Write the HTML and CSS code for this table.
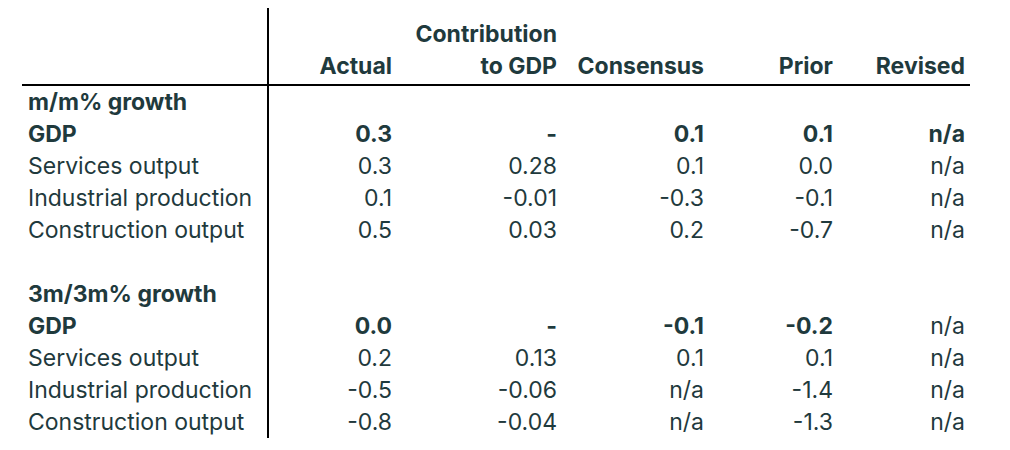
FILE: index.html
```html
<!DOCTYPE html>
<html>
<head>
<meta charset="utf-8">
<link rel="stylesheet" href="styles.css">
</head>
<body>
<table class="gdp">
  <colgroup>
    <col class="c-label">
    <col class="c-actual">
    <col class="c-contrib">
    <col class="c-cons">
    <col class="c-prior">
    <col class="c-rev">
  </colgroup>
  <thead>
    <tr>
      <th class="label"></th>
      <th>Actual</th>
      <th>Contribution<br>to GDP</th>
      <th>Consensus</th>
      <th>Prior</th>
      <th>Revised</th>
    </tr>
  </thead>
  <tbody>
    <tr class="bold"><td class="label">m/m% growth</td><td></td><td></td><td></td><td></td><td></td></tr>
    <tr><td class="label b">GDP</td><td class="b">0.3</td><td class="b">-</td><td class="b">0.1</td><td class="b">0.1</td><td class="b">n/a</td></tr>
    <tr><td class="label">Services output</td><td>0.3</td><td>0.28</td><td>0.1</td><td>0.0</td><td>n/a</td></tr>
    <tr><td class="label">Industrial production</td><td>0.1</td><td>-0.01</td><td>-0.3</td><td>-0.1</td><td>n/a</td></tr>
    <tr><td class="label">Construction output</td><td>0.5</td><td>0.03</td><td>0.2</td><td>-0.7</td><td>n/a</td></tr>
    <tr><td class="label"></td><td></td><td></td><td></td><td></td><td></td></tr>
    <tr class="bold"><td class="label">3m/3m% growth</td><td></td><td></td><td></td><td></td><td></td></tr>
    <tr><td class="label b">GDP</td><td class="b">0.0</td><td class="b">-</td><td class="b">-0.1</td><td class="b">-0.2</td><td>n/a</td></tr>
    <tr><td class="label">Services output</td><td>0.2</td><td>0.13</td><td>0.1</td><td>0.1</td><td>n/a</td></tr>
    <tr><td class="label">Industrial production</td><td>-0.5</td><td>-0.06</td><td>n/a</td><td>-1.4</td><td>n/a</td></tr>
    <tr><td class="label">Construction output</td><td>-0.8</td><td>-0.04</td><td>n/a</td><td>-1.3</td><td>n/a</td></tr>
  </tbody>
</table>
</body>
</html>
```

FILE: styles.css
```css
html, body {
  margin: 0;
  padding: 0;
  background: #ffffff;
}

body {
  padding: 8px 0 0 22px;
  font-family: Inter, "Liberation Sans", sans-serif;
  font-size: 23px;
  color: #1f3a3d;
}

.gdp {
  border-collapse: collapse;
  table-layout: fixed;
  width: 948px;
}

.c-label { width: 246px; }
.c-actual { width: 124px; }
.c-contrib { width: 165px; }
.c-cons { width: 147px; }
.c-prior { width: 129px; }
.c-rev { width: 137px; }

.gdp th,
.gdp td {
  padding: 0;
  text-align: right;
  vertical-align: bottom;
  line-height: 32px;
  height: 32px;
  white-space: nowrap;
}

.gdp th {
  font-weight: 700;
  padding-top: 10px;
  padding-bottom: 2px;
  border-bottom: 2px solid #000;
}

.gdp th:last-child,
.gdp td:last-child {
  padding-right: 5px;
}

.gdp .label {
  text-align: left;
  padding-left: 6px;
  border-right: 2px solid #000;
}

.gdp .bold td,
.gdp .b {
  font-weight: 700;
}
```
